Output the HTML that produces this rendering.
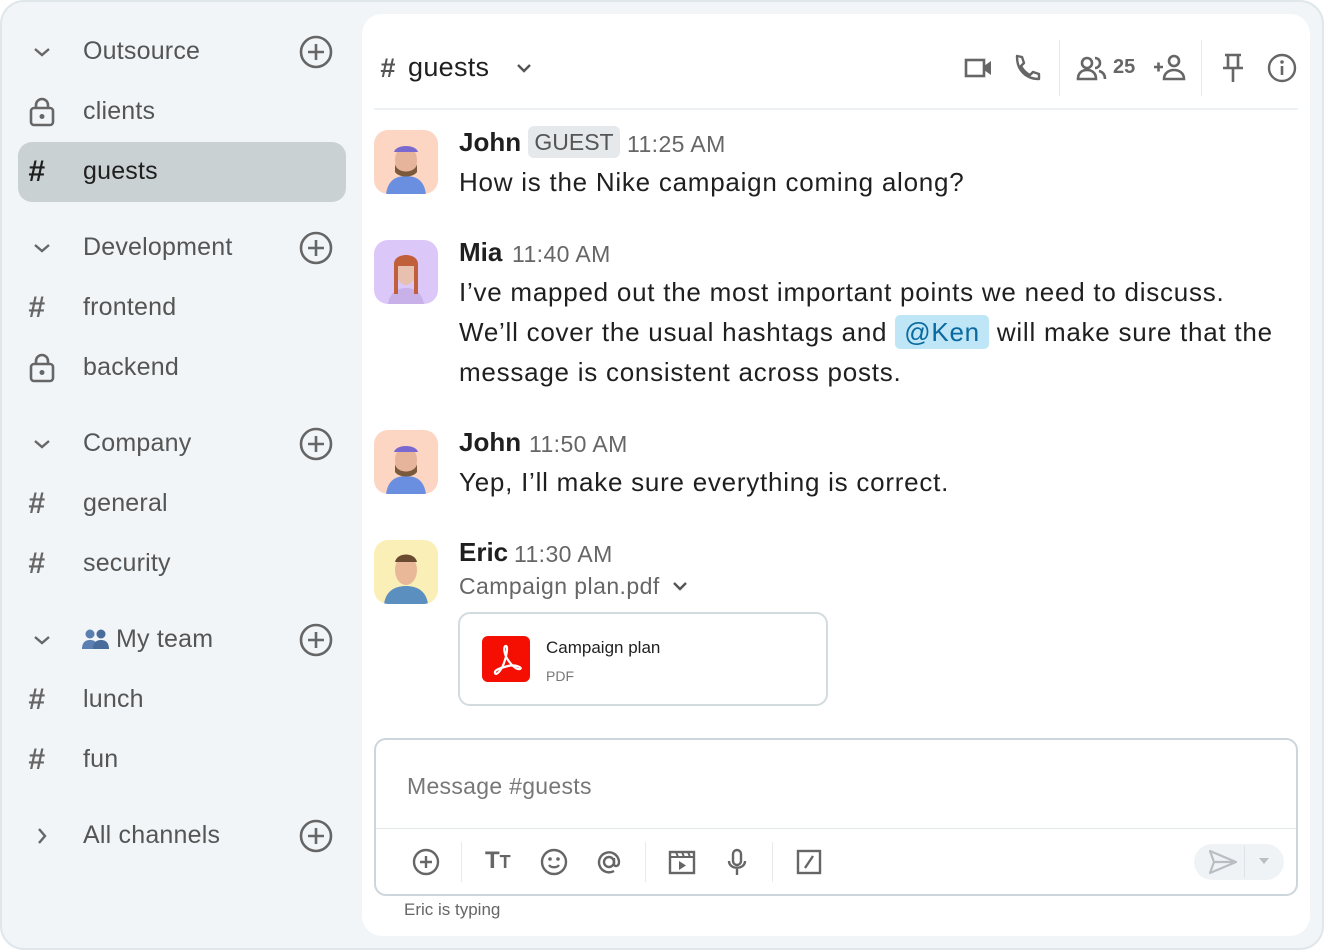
<!DOCTYPE html>
<html><head><style>
*{margin:0;padding:0;box-sizing:border-box}
body{width:1324px;height:950px;background:#fff;font-family:"Liberation Sans",sans-serif;position:relative;overflow:hidden}
.frame{position:absolute;left:0;top:0;width:1324px;height:950px;background:#f1f5f8;border:2px solid #dfe7ea;border-radius:24px}
.a{position:absolute;white-space:nowrap}
.sb{font-size:25px;color:#555;letter-spacing:0.2px}
.ic{position:absolute;color:#666}
.main{position:absolute;left:362px;top:14px;width:948px;height:922px;background:#fff;border-radius:20px}
.msg{font-size:26px;color:#1f1f1f;letter-spacing:0.75px}
.nm{font-weight:bold;font-size:26px;color:#1f1f1f}
.tm{font-size:23px;color:#666;font-weight:normal;letter-spacing:0.4px}
.av{position:absolute;width:64px;height:64px;border-radius:14px;overflow:hidden}
</style></head><body>
<div class="frame"></div>
<!-- sidebar -->
<div class="a" style="left:18px;top:142px;width:328px;height:60px;background:#c9d1d3;border-radius:14px"></div>
<svg class="ic" style="left:30px;top:40px" width="24" height="24" viewBox="0 0 24 24"><path d="M5 9l7 6 7-6" fill="none" stroke="#666" stroke-width="2.4"/></svg>
<div class="a sb" style="left:83px;top:37px">Outsource</div>
<svg class="ic" style="left:299px;top:35px" width="34" height="34" viewBox="0 0 34 34"><circle cx="17" cy="17" r="15" fill="none" stroke="#666" stroke-width="2.6"/><path d="M17 9v16M9 17h16" stroke="#666" stroke-width="2.6"/></svg>
<svg class="ic" style="left:28px;top:97px" width="28" height="30" viewBox="0 0 28 30"><rect x="3" y="11" width="22" height="17" rx="3" fill="none" stroke="#666" stroke-width="2.6"/><path d="M8 11V8a6 6 0 0 1 12 0v3" fill="none" stroke="#666" stroke-width="2.6"/><circle cx="14" cy="19.5" r="2.5" fill="#666"/></svg>
<div class="a sb" style="left:83px;top:97px">clients</div>
<div class="a" style="left:28px;top:155px;font-size:30px;font-weight:bold;color:#1f1f1f;font-style:italic">#</div>
<div class="a sb" style="left:83px;top:157px;color:#1f1f1f">guests</div>

<svg class="ic" style="left:30px;top:236px" width="24" height="24" viewBox="0 0 24 24"><path d="M5 9l7 6 7-6" fill="none" stroke="#666" stroke-width="2.4"/></svg>
<div class="a sb" style="left:83px;top:233px">Development</div>
<svg class="ic" style="left:299px;top:231px" width="34" height="34" viewBox="0 0 34 34"><circle cx="17" cy="17" r="15" fill="none" stroke="#666" stroke-width="2.6"/><path d="M17 9v16M9 17h16" stroke="#666" stroke-width="2.6"/></svg>
<div class="a" style="left:28px;top:291px;font-size:30px;color:#666;font-style:italic;font-weight:bold">#</div>
<div class="a sb" style="left:83px;top:293px">frontend</div>
<svg class="ic" style="left:28px;top:353px" width="28" height="30" viewBox="0 0 28 30"><rect x="3" y="11" width="22" height="17" rx="3" fill="none" stroke="#666" stroke-width="2.6"/><path d="M8 11V8a6 6 0 0 1 12 0v3" fill="none" stroke="#666" stroke-width="2.6"/><circle cx="14" cy="19.5" r="2.5" fill="#666"/></svg>
<div class="a sb" style="left:83px;top:353px">backend</div>

<svg class="ic" style="left:30px;top:432px" width="24" height="24" viewBox="0 0 24 24"><path d="M5 9l7 6 7-6" fill="none" stroke="#666" stroke-width="2.4"/></svg>
<div class="a sb" style="left:83px;top:429px">Company</div>
<svg class="ic" style="left:299px;top:427px" width="34" height="34" viewBox="0 0 34 34"><circle cx="17" cy="17" r="15" fill="none" stroke="#666" stroke-width="2.6"/><path d="M17 9v16M9 17h16" stroke="#666" stroke-width="2.6"/></svg>
<div class="a" style="left:28px;top:487px;font-size:30px;color:#666;font-style:italic;font-weight:bold">#</div>
<div class="a sb" style="left:83px;top:489px">general</div>
<div class="a" style="left:28px;top:547px;font-size:30px;color:#666;font-style:italic;font-weight:bold">#</div>
<div class="a sb" style="left:83px;top:549px">security</div>

<svg class="ic" style="left:30px;top:628px" width="24" height="24" viewBox="0 0 24 24"><path d="M5 9l7 6 7-6" fill="none" stroke="#666" stroke-width="2.4"/></svg>
<svg class="ic" style="left:82px;top:628px" width="28" height="22" viewBox="0 0 28 22"><circle cx="8" cy="6" r="4.5" fill="#5a7fb0"/><circle cx="19" cy="6" r="4.5" fill="#4a6c9a"/><path d="M0 21c0-7 4-9 8-9s8 2 8 9z" fill="#5a7fb0"/><path d="M11 21c0-7 4-9 8-9s8 2 8 9z" fill="#4a6c9a"/></svg>
<div class="a sb" style="left:116px;top:625px">My team</div>
<svg class="ic" style="left:299px;top:623px" width="34" height="34" viewBox="0 0 34 34"><circle cx="17" cy="17" r="15" fill="none" stroke="#666" stroke-width="2.6"/><path d="M17 9v16M9 17h16" stroke="#666" stroke-width="2.6"/></svg>
<div class="a" style="left:28px;top:683px;font-size:30px;color:#666;font-style:italic;font-weight:bold">#</div>
<div class="a sb" style="left:83px;top:685px">lunch</div>
<div class="a" style="left:28px;top:743px;font-size:30px;color:#666;font-style:italic;font-weight:bold">#</div>
<div class="a sb" style="left:83px;top:745px">fun</div>

<svg class="ic" style="left:30px;top:824px" width="24" height="24" viewBox="0 0 24 24"><path d="M9 5l6 7-6 7" fill="none" stroke="#666" stroke-width="2.4"/></svg>
<div class="a sb" style="left:83px;top:821px">All channels</div>
<svg class="ic" style="left:299px;top:819px" width="34" height="34" viewBox="0 0 34 34"><circle cx="17" cy="17" r="15" fill="none" stroke="#666" stroke-width="2.6"/><path d="M17 9v16M9 17h16" stroke="#666" stroke-width="2.6"/></svg>

<!-- main -->
<div class="main"></div>
<div class="a" style="left:380px;top:53px;font-size:27px;color:#555;font-style:italic;font-weight:bold">#</div>
<div class="a" style="left:408px;top:52px;font-size:27px;color:#1f1f1f;letter-spacing:0.3px">guests</div>
<svg class="ic" style="left:514px;top:58px" width="20" height="20" viewBox="0 0 20 20"><path d="M4 7l6 6 6-6" fill="none" stroke="#555" stroke-width="2.4"/></svg>
<svg class="ic" style="left:964px;top:56px" width="30" height="24" viewBox="0 0 30 24"><rect x="2" y="4" width="18" height="16" fill="none" stroke="#666" stroke-width="2.6"/><path d="M20 10l7-5v14l-7-5z" fill="#666"/></svg>
<svg class="ic" style="left:1012px;top:53px" width="30" height="30" viewBox="0 0 30 30"><path d="M5 3l5 1 2 6-3 3c2 4 5 7 9 9l3-3 6 2v5c-13 0-22-9-22-22z" fill="none" stroke="#666" stroke-width="2.4" stroke-linejoin="round"/></svg>
<div class="a" style="left:1059px;top:40px;width:1px;height:56px;background:#e6eaec"></div>
<svg class="ic" style="left:1076px;top:55px" width="32" height="26" viewBox="0 0 32 26"><circle cx="11" cy="8" r="5" fill="none" stroke="#666" stroke-width="2.6"/><path d="M2 24c0-7 5-9 9-9s9 2 9 9z" fill="none" stroke="#666" stroke-width="2.6"/><path d="M19 3a5 5 0 0 1 0 10M23 16c4 1 6 4 6 8" fill="none" stroke="#666" stroke-width="2.6"/></svg>
<div class="a" style="left:1113px;top:56px;font-size:20px;color:#666;font-weight:bold">25</div>
<svg class="ic" style="left:1152px;top:53px" width="34" height="28" viewBox="0 0 34 28"><path d="M2 14h9M6.5 9.5v9" stroke="#666" stroke-width="2.6"/><circle cx="22" cy="8" r="5" fill="none" stroke="#666" stroke-width="2.6"/><path d="M12 26c0-6 5-9 10-9s10 3 10 9z" fill="none" stroke="#666" stroke-width="2.6"/></svg>
<div class="a" style="left:1201px;top:40px;width:1px;height:56px;background:#e6eaec"></div>
<svg class="ic" style="left:1220px;top:52px" width="26" height="32" viewBox="0 0 26 32"><path d="M5 3h16M8 3v12M18 3v12M3 16h20M13 16v14" fill="none" stroke="#666" stroke-width="2.6"/></svg>
<svg class="ic" style="left:1267px;top:53px" width="30" height="30" viewBox="0 0 30 30"><circle cx="15" cy="15" r="13" fill="none" stroke="#666" stroke-width="2.4"/><path d="M15 13v9" stroke="#666" stroke-width="2.6"/><circle cx="15" cy="9" r="1.8" fill="#666"/></svg>
<div class="a" style="left:374px;top:108px;width:924px;height:2px;background:#edf1f3"></div>

<!-- messages -->
<div class="av" style="left:374px;top:130px;background:#fdd5c3"><svg width="64" height="64"><path d="M12 64c2-14 10-18 20-18s18 4 20 18z" fill="#6a8fe0"/><ellipse cx="32" cy="30" rx="11" ry="14" fill="#e6b49a"/><path d="M21 34c2 10 20 10 22 0v8c-4 6-18 6-22 0z" fill="#7a5a3a"/><path d="M20 22c2-8 22-8 24 0z" fill="#7a6ad0"/></svg></div>
<div class="a nm" style="left:459px;top:127px">John</div>
<div class="a" style="left:528px;top:126px;width:92px;height:32px;background:#e5e9ec;border-radius:6px;font-size:23px;color:#555;text-align:center;line-height:32px">GUEST</div>
<div class="a tm" style="left:627px;top:131px">11:25 AM</div>
<div class="a msg" style="left:459px;top:167px">How is the Nike campaign coming along?</div>

<div class="av" style="left:374px;top:240px;background:#dcc8f8"><svg width="64" height="64"><path d="M14 64c2-12 10-16 18-16s16 4 18 16z" fill="#c8b0e8"/><ellipse cx="32" cy="30" rx="10" ry="15" fill="#e8c0b0"/><path d="M20 24c0-12 24-12 24 0v30h-4V26H24v28h-4z" fill="#c0603a"/></svg></div>
<div class="a nm" style="left:459px;top:237px">Mia</div>
<div class="a tm" style="left:512px;top:241px">11:40 AM</div>
<div class="a msg" style="left:459px;top:272px;line-height:40px">I’ve mapped out the most important points we need to discuss.<br>We’ll cover the usual hashtags and <span style="background:#bfe6f6;color:#0a6aa0;border-radius:5px;padding:2px 9px">@Ken</span> will make sure that the<br>message is consistent across posts.</div>

<div class="av" style="left:374px;top:430px;background:#fdd5c3"><svg width="64" height="64"><path d="M12 64c2-14 10-18 20-18s18 4 20 18z" fill="#6a8fe0"/><ellipse cx="32" cy="30" rx="11" ry="14" fill="#e6b49a"/><path d="M21 34c2 10 20 10 22 0v8c-4 6-18 6-22 0z" fill="#7a5a3a"/><path d="M20 22c2-8 22-8 24 0z" fill="#7a6ad0"/></svg></div>
<div class="a nm" style="left:459px;top:427px">John</div>
<div class="a tm" style="left:529px;top:431px">11:50 AM</div>
<div class="a msg" style="left:459px;top:467px">Yep, I’ll make sure everything is correct.</div>

<div class="av" style="left:374px;top:540px;background:#fbefb8"><svg width="64" height="64"><path d="M10 64c2-14 12-18 22-18s20 4 22 18z" fill="#5b8fc0"/><ellipse cx="32" cy="30" rx="11" ry="15" fill="#e8b898"/><path d="M21 22c2-10 20-10 22 0z" fill="#6a4a30"/></svg></div>
<div class="a nm" style="left:459px;top:537px">Eric</div>
<div class="a tm" style="left:514px;top:541px">11:30 AM</div>
<div class="a" style="left:459px;top:573px;font-size:23px;color:#666;letter-spacing:0.45px">Campaign plan.pdf</div>
<svg class="ic" style="left:670px;top:576px" width="20" height="20" viewBox="0 0 20 20"><path d="M4 7l6 6 6-6" fill="none" stroke="#555" stroke-width="2.4"/></svg>
<div class="a" style="left:458px;top:612px;width:370px;height:94px;border:2px solid #d3dbdf;border-radius:12px"></div>
<div class="a" style="left:482px;top:636px;width:48px;height:46px;background:#f40f02;border-radius:6px"><svg width="48" height="46" viewBox="0 0 48 46"><path d="M24 10c-3 0-2 8 2 14s9 10 12 9-4-5-12-3-14 4-13 7 6-2 9-10 4-17 2-17z" fill="none" stroke="#fff" stroke-width="2.2" stroke-linejoin="round"/></svg></div>
<div class="a" style="left:546px;top:638px;font-size:17px;color:#1f1f1f">Campaign plan</div>
<div class="a" style="left:546px;top:668px;font-size:14px;color:#777">PDF</div>

<!-- composer -->
<div class="a" style="left:374px;top:738px;width:924px;height:158px;border:2px solid #ccd6db;border-radius:12px"></div>
<div class="a" style="left:376px;top:828px;width:920px;height:1px;background:#e3e8eb"></div>
<div class="a" style="left:407px;top:773px;font-size:23px;color:#777;letter-spacing:0.3px">Message #guests</div>
<svg class="ic" style="left:412px;top:848px" width="28" height="28" viewBox="0 0 28 28"><circle cx="14" cy="14" r="12" fill="none" stroke="#666" stroke-width="2.4"/><path d="M14 8v12M8 14h12" stroke="#666" stroke-width="2.4"/></svg>
<div class="a" style="left:461px;top:842px;width:1px;height:40px;background:#e6eaec"></div>
<div class="a" style="left:485px;top:847px;font-size:24px;font-weight:bold;color:#666">T<span style="font-size:18px">T</span></div>
<svg class="ic" style="left:540px;top:848px" width="28" height="28" viewBox="0 0 28 28"><circle cx="14" cy="14" r="12" fill="none" stroke="#666" stroke-width="2.4"/><circle cx="10" cy="11" r="1.8" fill="#666"/><circle cx="18" cy="11" r="1.8" fill="#666"/><path d="M9 17c2 3 8 3 10 0" fill="none" stroke="#666" stroke-width="2.2"/></svg>
<svg class="ic" style="left:595px;top:848px" width="28" height="28" viewBox="0 0 28 28"><circle cx="14" cy="14" r="5" fill="none" stroke="#666" stroke-width="2.4"/><path d="M19 10v6c0 3 5 3 5-2a10 10 0 1 0-5 9" fill="none" stroke="#666" stroke-width="2.4"/></svg>
<div class="a" style="left:645px;top:842px;width:1px;height:40px;background:#e6eaec"></div>
<svg class="ic" style="left:668px;top:848px" width="28" height="28" viewBox="0 0 28 28"><rect x="2" y="4" width="24" height="21" fill="none" stroke="#666" stroke-width="2.4"/><path d="M2 9h24M8 4l2 5M14 4l2 5M20 4l2 5" stroke="#666" stroke-width="2"/><path d="M11 13v9l7-4.5z" fill="#666"/></svg>
<svg class="ic" style="left:725px;top:848px" width="24" height="28" viewBox="0 0 24 28"><rect x="8" y="2" width="8" height="15" rx="4" fill="none" stroke="#666" stroke-width="2.4"/><path d="M4 13c0 9 16 9 16 0M12 21v6" fill="none" stroke="#666" stroke-width="2.4"/></svg>
<div class="a" style="left:772px;top:842px;width:1px;height:40px;background:#e6eaec"></div>
<svg class="ic" style="left:796px;top:849px" width="26" height="26" viewBox="0 0 26 26"><rect x="2" y="2" width="22" height="22" fill="none" stroke="#666" stroke-width="2.4"/><path d="M9 19l8-12" stroke="#666" stroke-width="2.4"/></svg>
<div class="a" style="left:1194px;top:844px;width:90px;height:36px;background:#f0f3f5;border-radius:18px"></div>
<div class="a" style="left:1244px;top:846px;width:1px;height:32px;background:#dde3e6"></div>
<svg class="ic" style="left:1208px;top:849px" width="30" height="26" viewBox="0 0 30 26"><path d="M2 2l26 11L2 24l4-11z M6 13h22" fill="none" stroke="#b8bec2" stroke-width="2.2" stroke-linejoin="round"/></svg>
<svg class="ic" style="left:1257px;top:856px" width="14" height="10"><path d="M2 2h10L7 8z" fill="#b8bec2"/></svg>
<div class="a" style="left:404px;top:900px;font-size:17px;color:#666">Eric is typing</div>
</body></html>
